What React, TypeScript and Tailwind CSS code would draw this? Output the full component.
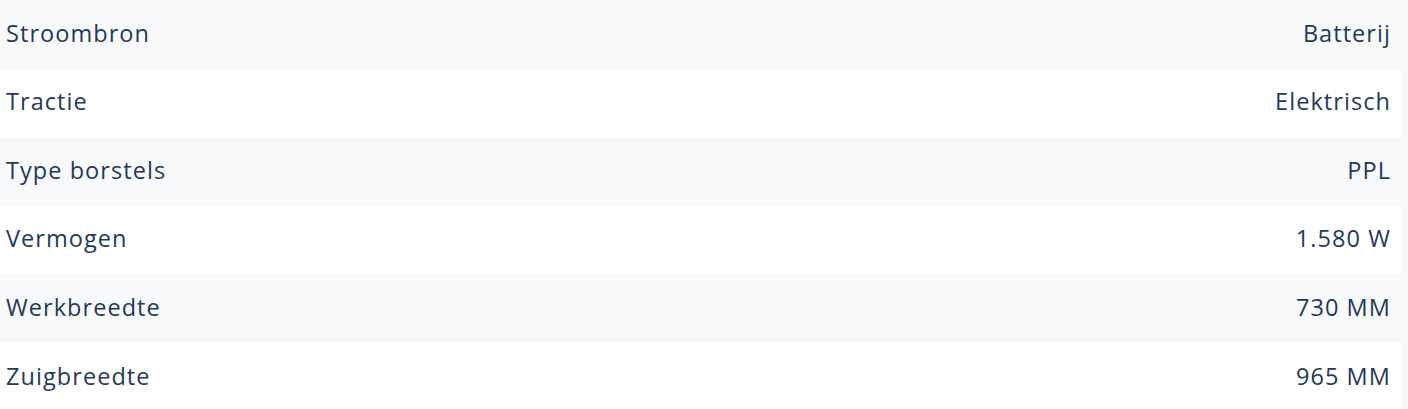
const specs = [
  ["Stroombron", "Batterij"],
  ["Tractie", "Elektrisch"],
  ["Type borstels", "PPL"],
  ["Vermogen", "1.580 W"],
  ["Werkbreedte", "730 MM"],
  ["Zuigbreedte", "965 MM"],
];

export default function App() {
  return (
    <div className="min-h-screen bg-[#f8f9fb] font-['Open_Sans',sans-serif] text-[#1f3a5b]">
      <div className="w-[1401px]">
        {specs.map(([label, value], i) => (
          <div
            key={label}
            className={`flex h-[68.6px] items-center justify-between pb-[2px] pl-[6px] pr-[10px] text-[23.5px] font-[380] tracking-[0.045em] ${
              i % 2 === 0 ? "bg-[#f8f9fb]" : "bg-white"
            }`}
          >
            <span>{label}</span>
            <span>{value}</span>
          </div>
        ))}
      </div>
    </div>
  );
}
